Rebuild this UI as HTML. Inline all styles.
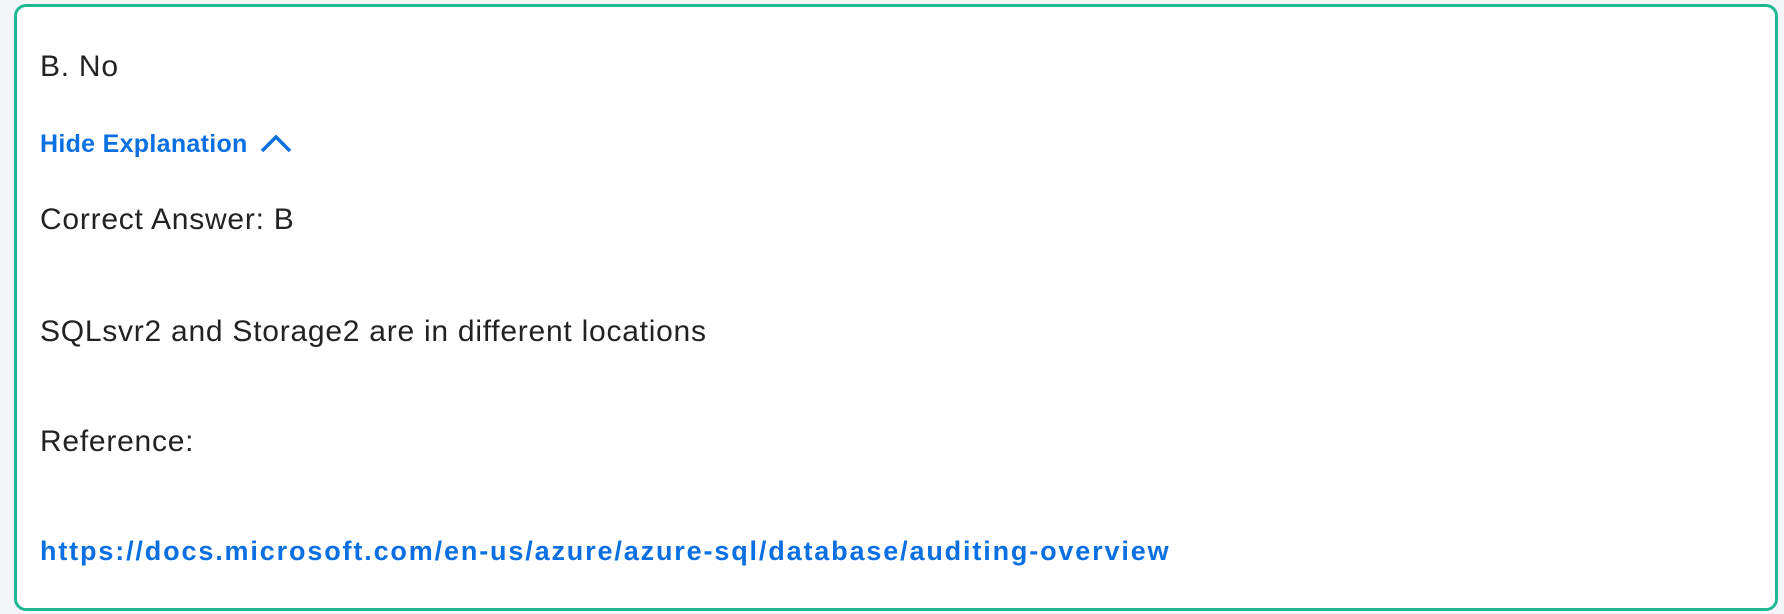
<!DOCTYPE html>
<html><head><style>
html,body{margin:0;padding:0;background:#f4f5f9;width:1784px;height:614px;overflow:hidden;font-family:"Liberation Sans",Arial,sans-serif}
.card{position:absolute;left:14px;top:4px;width:1758px;height:601px;border:3px solid #1fb893;border-radius:12px;background:#fff}
.t{position:absolute;left:23px;font-size:30px;letter-spacing:0.75px;color:#222;white-space:nowrap}
.b{position:absolute;left:23px;font-size:25px;font-weight:bold;color:#0a6fe0;white-space:nowrap}
</style></head><body>
<div class="card">
<div class="t" style="top:43px">B. No</div>
<div class="b" style="top:123px;letter-spacing:0.3px">Hide Explanation <svg width="36" height="22" viewBox="0 0 36 22" style="vertical-align:-2px;margin-left:3px"><path d="M4 19 L18 5 L32 19" fill="none" stroke="#0a6fe0" stroke-width="3.5"/></svg></div>
<div class="t" style="top:196px">Correct Answer: B</div>
<div class="t" style="top:308px">SQLsvr2 and Storage2 are in different locations</div>
<div class="t" style="top:418px">Reference:</div>
<div class="b" style="top:529px;font-size:27px;letter-spacing:1.85px">https://docs.microsoft.com/en-us/azure/azure-sql/database/auditing-overview</div>
</div>
</body></html>
